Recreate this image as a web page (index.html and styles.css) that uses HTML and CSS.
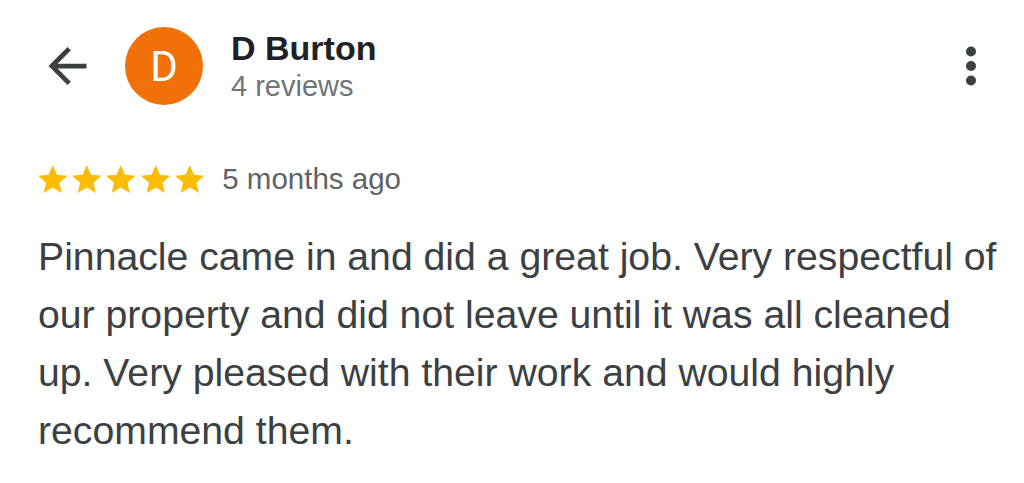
FILE: index.html
```html
<!DOCTYPE html>
<html lang="en">
<head>
<meta charset="utf-8">
<title>D Burton review</title>
<link rel="stylesheet" href="styles.css">
</head>
<body>
<div class="screen">
  <header class="head">
    <button class="icon-btn back" aria-label="Back">
      <svg width="39" height="38" viewBox="4 4 16 16" aria-hidden="true"><path d="M20 11H7.83l5.59-5.59L12 4l-8 8 8 8 1.41-1.41L7.83 13H20v-2z" fill="currentColor"/></svg>
    </button>
    <div class="avatar">D</div>
    <div class="who">
      <div class="name">D Burton</div>
      <div class="count">4 reviews</div>
    </div>
    <button class="icon-btn more" aria-label="More options">
      <svg width="10" height="40" viewBox="0 0 10 40" aria-hidden="true"><circle cx="5" cy="5.5" r="5" fill="currentColor"/><circle cx="5" cy="20" r="5" fill="currentColor"/><circle cx="5" cy="34.5" r="5" fill="currentColor"/></svg>
    </button>
  </header>
  <div class="meta">
    <div class="stars">
      <svg class="star" viewBox="2 2 20 19" aria-hidden="true"><path d="M12 17.27L18.18 21l-1.64-7.03L22 9.24l-7.19-.61L12 2 9.19 8.63 2 9.24l5.46 4.73L5.82 21z"/></svg>
      <svg class="star" viewBox="2 2 20 19" aria-hidden="true"><path d="M12 17.27L18.18 21l-1.64-7.03L22 9.24l-7.19-.61L12 2 9.19 8.63 2 9.24l5.46 4.73L5.82 21z"/></svg>
      <svg class="star" viewBox="2 2 20 19" aria-hidden="true"><path d="M12 17.27L18.18 21l-1.64-7.03L22 9.24l-7.19-.61L12 2 9.19 8.63 2 9.24l5.46 4.73L5.82 21z"/></svg>
      <svg class="star" viewBox="2 2 20 19" aria-hidden="true"><path d="M12 17.27L18.18 21l-1.64-7.03L22 9.24l-7.19-.61L12 2 9.19 8.63 2 9.24l5.46 4.73L5.82 21z"/></svg>
      <svg class="star" viewBox="2 2 20 19" aria-hidden="true"><path d="M12 17.27L18.18 21l-1.64-7.03L22 9.24l-7.19-.61L12 2 9.19 8.63 2 9.24l5.46 4.73L5.82 21z"/></svg>
    </div>
    <span class="ago">5 months ago</span>
  </div>
  <p class="text">Pinnacle came in and did a great job. Very respectful of our property and did not leave until it was all cleaned up. Very pleased with their work and would highly recommend them.</p>
</div>
</body>
</html>
```
FILE: styles.css
```css
html, body {
  margin: 0;
  padding: 0;
  background: #ffffff;
}
body {
  font-family: "Liberation Sans", Arial, sans-serif;
  width: 1024px;
  height: 483px;
  overflow: hidden;
}
.screen {
  padding: 0 18px 0 37px;
}
.head {
  display: flex;
  align-items: center;
  padding: 27px 30px 0 11px;
}
.icon-btn {
  border: 0;
  background: none;
  padding: 0;
  margin: 0;
  display: flex;
  color: #3c4043;
  cursor: pointer;
}
.back {
  margin-right: 38px;
}
.avatar {
  width: 78px;
  height: 78px;
  border-radius: 50%;
  background: #ef7108;
  color: #ffffff;
  font-family: Roboto, "Liberation Sans", sans-serif;
  font-size: 42px;
  display: flex;
  align-items: center;
  justify-content: center;
  flex: none;
}
.who {
  margin-left: 28px;
  display: flex;
  flex-direction: column;
}
.name {
  font-size: 34px;
  font-weight: 700;
  line-height: 38px;
  color: #202124;
}
.count {
  font-size: 29px;
  line-height: 34px;
  margin-top: 2px;
  color: #70757a;
}
.more {
  margin-left: auto;
  color: #3c4043;
}
.meta {
  display: flex;
  align-items: center;
  margin-top: 57px;
}
.stars {
  display: flex;
  gap: 4.7px;
  padding-left: 1px;
}
.star {
  width: 29.5px;
  height: 28px;
  fill: #fbbc04;
}
.ago {
  margin-left: 18px;
  font-size: 29.5px;
  line-height: 34px;
  color: #5f6368;
}
.text {
  margin: 32px 0 0 1px;
  font-size: 39.2px;
  line-height: 58px;
  color: #3c4043;
}
```
